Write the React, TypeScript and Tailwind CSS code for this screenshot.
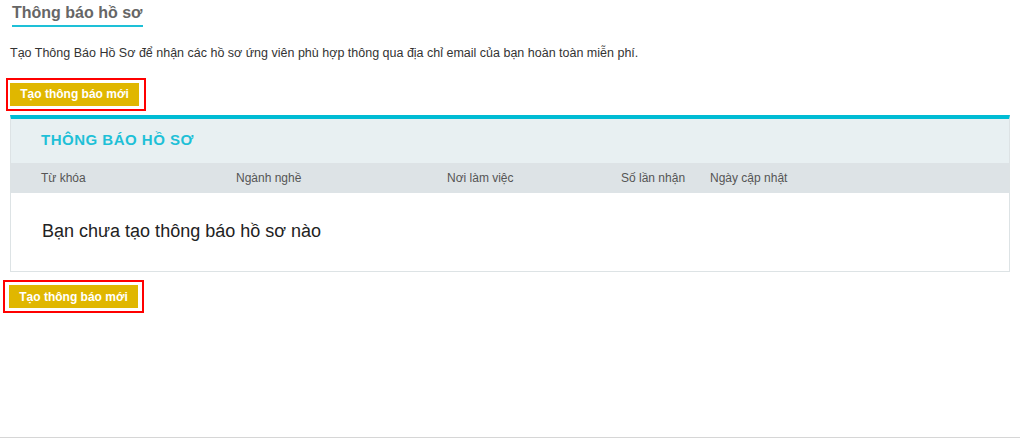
import React from 'react';

function NewButton() {
  return (
    <button className="bg-[#e0b700] text-white font-bold text-[12px] leading-none h-[23px] px-[10px] w-[129px]">
      Tạo thông báo mới
    </button>
  );
}

export default function App() {
  const cols = [
    { label: 'Từ khóa', w: 'w-[195px]' },
    { label: 'Ngành nghề', w: 'w-[211px]' },
    { label: 'Nơi làm việc', w: 'w-[174px]' },
    { label: 'Số lần nhận', w: 'w-[89px]' },
    { label: 'Ngày cập nhật', w: '' },
  ];

  return (
    <div className="w-[1020px] h-[446px] bg-white font-['Liberation_Sans',Arial,sans-serif] text-[#333] flex flex-col">
      <div className="flex-1 px-[10px]">
        <div className="pl-[2px] pt-[1px]">
          <h1 className="inline-block text-[16px] font-bold text-[#666] leading-[20px] pb-[2px] border-b-2 border-[#1ec0d7] pr-[1px]">
            Thông báo hồ sơ
          </h1>
        </div>
        <p className="text-[12.5px] mt-[19px] leading-[14px]">
          Tạo Thông Báo Hồ Sơ để nhận các hồ sơ ứng viên phù hợp thông qua địa chỉ email của bạn hoàn toàn miễn phí.
        </p>
        <div className="mt-[18px] -ml-[4px] inline-block border-2 border-[#ff0000] pl-[2px] pt-[1px] pr-[5px] pb-[3px]">
          <NewButton />
        </div>

        <div className="mt-[4px] border-t-4 border-[#00bcd4] border-x border-b border-x-[#dde3e5] border-b-[#dde3e5]">
          <div className="bg-[#e8f0f2] h-[44px] flex items-center pl-[30px]">
            <span className="text-[#1ec0d7] font-bold text-[15px] tracking-[0.5px]">THÔNG BÁO HỒ SƠ</span>
          </div>
          <div className="bg-[#dde3e6] h-[30px] flex items-center pl-[30px] text-[12px] text-[#555]">
            {cols.map((c) => (
              <div key={c.label} className={c.w}>
                {c.label}
              </div>
            ))}
          </div>
          <div className="h-[78px] flex items-center pl-[31px] text-[18px] text-[#222]">
            Bạn chưa tạo thông báo hồ sơ nào
          </div>
        </div>

        <div className="mt-[8px] -ml-[7px] inline-block border-2 border-[#ff0000] pl-[4px] pt-[2px] pr-[4px] pb-[3px]">
          <NewButton />
        </div>
      </div>
      <div className="h-[9px] border-t border-[#d6d6d6]"></div>
    </div>
  );
}
